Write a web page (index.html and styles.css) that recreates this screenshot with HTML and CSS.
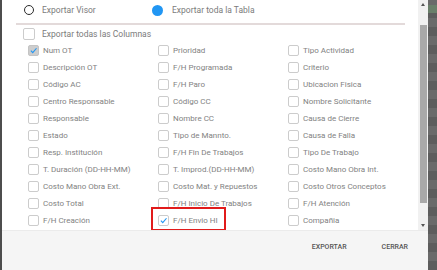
FILE: index.html
```html
<!DOCTYPE html>
<html lang="es">
<head>
<meta charset="utf-8">
<title>Exportar</title>
<link rel="stylesheet" href="styles.css">
</head>
<body>
<div class="strip-left"></div>
<div class="dialog">
  <div class="dialog-body">
    <div class="content">
      <div class="radio-row">
        <label class="radio-opt"><span class="radio"></span><span>Exportar Visor</span></label>
        <label class="radio-opt"><span class="radio on"></span><span>Exportar toda la Tabla</span></label>
      </div>
      <div class="divider"></div>
      <label class="all-row"><span class="box"></span><span>Exportar todas las Columnas</span></label>
      <div class="grid">
        <label class="item"><span class="box checked grey"><svg viewBox="0 0 12 12"><polyline points="2.5,6.3 5,8.8 10,3"/></svg></span><span>Num OT</span></label>
        <label class="item"><span class="box"></span><span>Prioridad</span></label>
        <label class="item"><span class="box"></span><span>Tipo Actividad</span></label>

        <label class="item"><span class="box"></span><span>Descripción OT</span></label>
        <label class="item"><span class="box"></span><span>F/H Programada</span></label>
        <label class="item"><span class="box"></span><span>Criterio</span></label>

        <label class="item"><span class="box"></span><span>Código AC</span></label>
        <label class="item"><span class="box"></span><span>F/H Paro</span></label>
        <label class="item"><span class="box"></span><span>Ubicacion Fisica</span></label>

        <label class="item"><span class="box"></span><span>Centro Responsable</span></label>
        <label class="item"><span class="box"></span><span>Código CC</span></label>
        <label class="item"><span class="box"></span><span>Nombre Solicitante</span></label>

        <label class="item"><span class="box"></span><span>Responsable</span></label>
        <label class="item"><span class="box"></span><span>Nombre CC</span></label>
        <label class="item"><span class="box"></span><span>Causa de Cierre</span></label>

        <label class="item"><span class="box"></span><span>Estado</span></label>
        <label class="item"><span class="box"></span><span>Tipo de Mannto.</span></label>
        <label class="item"><span class="box"></span><span>Causa de Falla</span></label>

        <label class="item"><span class="box"></span><span>Resp. Institución</span></label>
        <label class="item"><span class="box"></span><span>F/H Fin De Trabajos</span></label>
        <label class="item"><span class="box"></span><span>Tipo De Trabajo</span></label>

        <label class="item"><span class="box"></span><span>T. Duración (DD-HH-MM)</span></label>
        <label class="item"><span class="box"></span><span>T. Improd.(DD-HH-MM)</span></label>
        <label class="item"><span class="box"></span><span>Costo Mano Obra Int.</span></label>

        <label class="item"><span class="box"></span><span>Costo Mano Obra Ext.</span></label>
        <label class="item"><span class="box"></span><span>Costo Mat. y Repuestos</span></label>
        <label class="item"><span class="box"></span><span>Costo Otros Conceptos</span></label>

        <label class="item"><span class="box"></span><span>Costo Total</span></label>
        <label class="item"><span class="box"></span><span>F/H Inicio De Trabajos</span></label>
        <label class="item"><span class="box"></span><span>F/H Atención</span></label>

        <label class="item"><span class="box"></span><span>F/H Creación</span></label>
        <label class="item"><span class="box checked"><svg viewBox="0 0 12 12"><polyline points="2.5,6.3 5,8.8 10,3"/></svg></span><span>F/H Envio HI</span></label>
        <label class="item"><span class="box"></span><span>Compañia</span></label>
      </div>
    </div>
    <div class="highlight"></div>
    <div class="scrollbar">
      <div class="sb-arrow up"></div>
      <div class="sb-thumb"></div>
      <div class="sb-space"></div>
      <div class="sb-arrow down"></div>
    </div>
  </div>
  <div class="footer">
    <span class="btn">EXPORTAR</span>
    <span class="btn">CERRAR</span>
  </div>
</div>
<div class="backdrop"></div>
</body>
</html>
```
FILE: styles.css
```css
* { box-sizing: border-box; }
html, body { margin: 0; padding: 0; }
body {
  width: 437px;
  height: 270px;
  overflow: hidden;
  display: flex;
  background: #5f5f5f;
  font-family: Roboto, "Noto Sans", sans-serif;
}
.strip-left {
  width: 2px;
  background: #4d4d4d;
}
.dialog {
  width: 426px;
  display: flex;
  flex-direction: column;
  background: #fff;
}
.dialog-body {
  position: relative;
  height: 230px;
  display: flex;
  background: #fff;
  overflow: hidden;
}
.content {
  flex: 1;
  padding-left: 14px;
}
.radio-row {
  height: 20px;
  display: flex;
  align-items: center;
  padding-left: 8px;
  font-size: 8.5px;
  color: #7b7b7b;
}
.radio-opt {
  display: flex;
  align-items: center;
  width: 128px;
}
.radio {
  width: 10px;
  height: 10px;
  border: 1.7px solid #2b2b2b;
  border-radius: 50%;
  margin-right: 8px;
  flex: none;
}
.radio.on {
  width: 11px;
  height: 11px;
  border: none;
  background: #2196f3;
  margin-right: 9px;
}
.divider {
  margin-top: 3px;
  width: 389px;
  height: 2px;
  background: #e3dada;
}
.all-row {
  height: 17px;
  display: flex;
  align-items: center;
  padding-left: 7px;
  font-size: 8.5px;
  color: #7b7b7b;
}
.all-row .box {
  width: 12px;
  height: 12px;
  margin-right: 7px;
}
.grid {
  display: grid;
  grid-template-columns: 130px 130px 130px;
  grid-auto-rows: 17px;
  padding-left: 12px;
}
.item {
  display: flex;
  align-items: center;
  font-size: 8px;
  color: #828282;
  white-space: nowrap;
}
.box {
  width: 11px;
  height: 11px;
  border: 1px solid #cccccc;
  border-radius: 2px;
  background: #fff;
  margin-right: 4px;
  flex: none;
  display: flex;
  align-items: center;
  justify-content: center;
}
.box.grey {
  background: #cdcdcd;
  border-color: #c4c4c4;
}
.box svg {
  width: 11px;
  height: 11px;
  fill: none;
  stroke: #2196f3;
  stroke-width: 1.5;
}
.highlight {
  position: absolute;
  left: 149px;
  top: 207px;
  width: 75px;
  height: 24px;
  border: 2px solid #e11b1b;
}
.scrollbar {
  width: 10px;
  background: #f1f1f1;
  display: flex;
  flex-direction: column;
  align-items: center;
}
.sb-arrow {
  height: 8px;
  width: 10px;
  display: flex;
  align-items: center;
  justify-content: center;
}
.sb-arrow::before {
  content: "";
  border-left: 2.5px solid transparent;
  border-right: 2.5px solid transparent;
}
.sb-arrow.up::before { border-bottom: 3px solid #555; }
.sb-arrow.down::before { border-top: 3px solid #555; }
.sb-arrow.down { height: 10px; }
.sb-thumb {
  margin-top: 17px;
  width: 7px;
  height: 178px;
  background: #a9a9a9;
}
.sb-space { flex: 1; }
.footer {
  flex: 1;
  background: #f5f5f5;
  border-top: 1px solid #ebebeb;
  display: flex;
  justify-content: flex-end;
  align-items: flex-start;
  padding-top: 12px;
  padding-right: 20px;
  gap: 35px;
}
.btn {
  font-size: 7px;
  font-weight: 500;
  color: #555;
  line-height: 9px;
}
.backdrop {
  flex: 1;
  background:
    linear-gradient(#6a7f6a, #6a7f6a) 0 5px / 100% 8px no-repeat,
    repeating-linear-gradient(to bottom, #6a6a6a 0 9px, #5d5d5d 9px 18px);
}
```
